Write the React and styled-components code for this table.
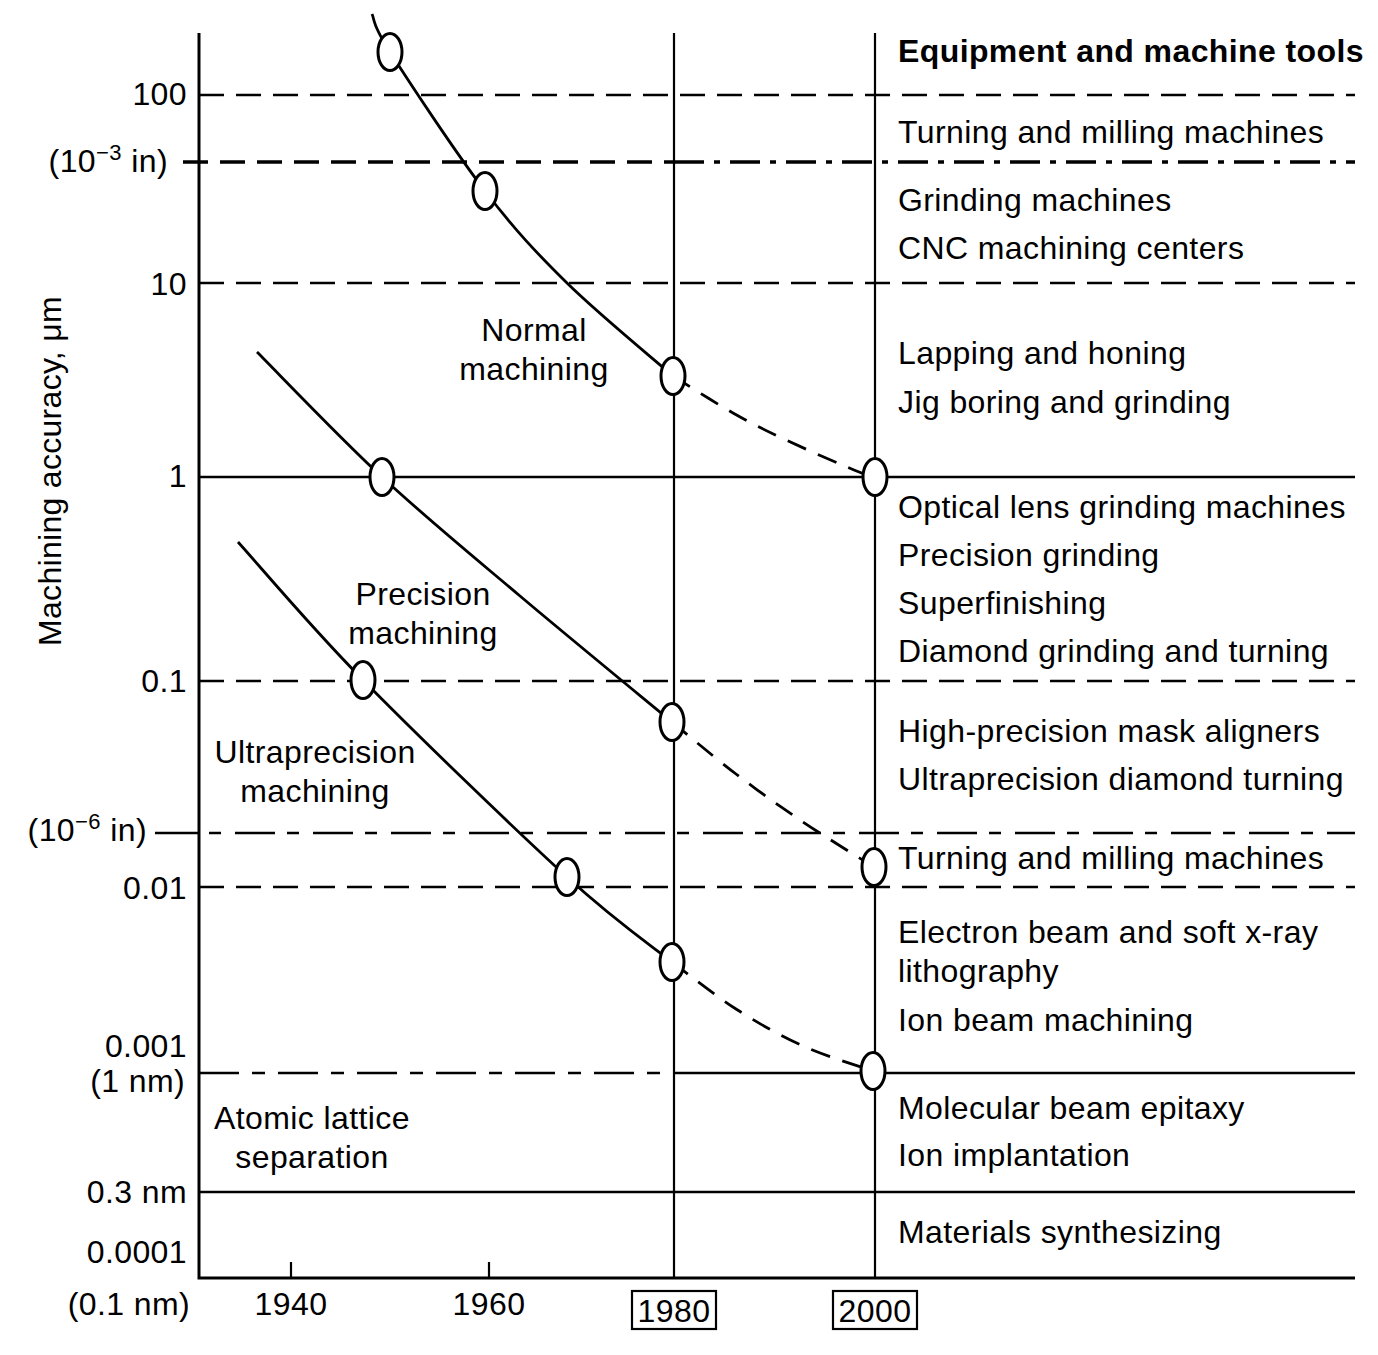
import styled, { createGlobalStyle } from "styled-components";

const GlobalStyle = createGlobalStyle`
  html, body {
    margin: 0;
    padding: 0;
    background: #fff;
  }
  body {
    font-family: "Liberation Sans", Arial, Helvetica, sans-serif;
  }
`;

// chart geometry (px)
const AXIS_X = 199;
const AXIS_BOTTOM = 1278;
const TOP = 33;
const RIGHT = 1355;
const X1980 = 674;
const X2000 = 875;

const DASHES = {
  solid: "none",
  dash: "25 12",
  dashDot: "30 10 6 10",
  longShort: "40 13 13 13",
  shortLong: "12 14 40 12",
};

// catmull-rom through the points, turned into cubic beziers
const smooth = (pts) => {
  let d = `M${pts[0][0]},${pts[0][1]}`;
  for (let i = 0; i < pts.length - 1; i++) {
    const p0 = pts[i - 1] || pts[i];
    const p1 = pts[i];
    const p2 = pts[i + 1];
    const p3 = pts[i + 2] || p2;
    const c1x = p1[0] + (p2[0] - p0[0]) / 6;
    const c1y = p1[1] + (p2[1] - p0[1]) / 6;
    const c2x = p2[0] - (p3[0] - p1[0]) / 6;
    const c2y = p2[1] - (p3[1] - p1[1]) / 6;
    d += ` C${c1x},${c1y} ${c2x},${c2y} ${p2[0]},${p2[1]}`;
  }
  return d;
};

const gridLines = [
  { x1: AXIS_X, x2: RIGHT, y: 95, kind: "dash" },
  { x1: 183, x2: X1980, y: 162, kind: "dash", weight: 3.4 },
  { x1: X1980, x2: RIGHT, y: 162, kind: "dashDot", weight: 3.4 },
  { x1: AXIS_X, x2: RIGHT, y: 283, kind: "dash" },
  { x1: AXIS_X, x2: RIGHT, y: 477, kind: "solid" },
  { x1: AXIS_X, x2: RIGHT, y: 681, kind: "dash" },
  { x1: 155, x2: AXIS_X, y: 833, kind: "solid" },
  { x1: 209, x2: RIGHT, y: 833, kind: "shortLong" },
  { x1: AXIS_X, x2: RIGHT, y: 887, kind: "dash" },
  { x1: AXIS_X, x2: X1980 - 10, y: 1073, kind: "longShort" },
  { x1: X1980, x2: RIGHT, y: 1073, kind: "solid" },
  { x1: AXIS_X, x2: RIGHT, y: 1192, kind: "solid" },
];

const yLabels = [
  { text: "100", x: 187, y: 105 },
  { text: "(10", sup: "−3", rest: " in)", x: 168, y: 172 },
  { text: "10", x: 187, y: 295 },
  { text: "1", x: 187, y: 487 },
  { text: "0.1", x: 187, y: 692 },
  { text: "(10", sup: "−6", rest: " in)", x: 147, y: 841 },
  { text: "0.01", x: 187, y: 899 },
  { text: "0.001", x: 187, y: 1057 },
  { text: "(1 nm)", x: 185, y: 1092 },
  { text: "0.3 nm", x: 187, y: 1203 },
  { text: "0.0001", x: 187, y: 1263 },
  { text: "(0.1 nm)", x: 190, y: 1315 },
];

const years = [
  { label: "1940", x: 291 },
  { label: "1960", x: 489 },
  { label: "1980", x: X1980, boxed: true },
  { label: "2000", x: X2000, boxed: true },
];

const regionLabels = [
  { lines: ["Normal", "machining"], x: 534, y: 341 },
  { lines: ["Precision", "machining"], x: 423, y: 605 },
  { lines: ["Ultraprecision", "machining"], x: 315, y: 763 },
  { lines: ["Atomic lattice", "separation"], x: 312, y: 1129 },
];

const equipment = [
  { text: "Turning and milling machines", y: 143 },
  { text: "Grinding machines", y: 211 },
  { text: "CNC machining centers", y: 259 },
  { text: "Lapping and honing", y: 364 },
  { text: "Jig boring and grinding", y: 413 },
  { text: "Optical lens grinding machines", y: 518 },
  { text: "Precision grinding", y: 566 },
  { text: "Superfinishing", y: 614 },
  { text: "Diamond grinding and turning", y: 662 },
  { text: "High-precision mask aligners", y: 742 },
  { text: "Ultraprecision diamond turning", y: 790 },
  { text: "Turning and milling machines", y: 869 },
  { text: "Electron beam and soft x-ray", y: 943 },
  { text: "lithography", y: 982 },
  { text: "Ion beam machining", y: 1031 },
  { text: "Molecular beam epitaxy", y: 1119 },
  { text: "Ion implantation", y: 1166 },
  { text: "Materials synthesizing", y: 1243 },
];

const trends = [
  {
    solid: [[372, 14], [390, 52], [485, 191], [567, 283], [673, 376]],
    dashed: [[673, 376], [733, 413], [786, 440], [854, 470], [875, 477]],
    points: [[390, 52], [485, 191], [673, 376], [875, 477]],
  },
  {
    solid: [[257, 352], [382, 477], [520, 596], [672, 722]],
    dashed: [[672, 722], [736, 774], [803, 822], [874, 867]],
    points: [[382, 477], [672, 722], [874, 867]],
  },
  {
    solid: [[238, 542], [363, 680], [567, 877], [672, 962]],
    dashed: [[672, 962], [736, 1009], [803, 1046], [873, 1071]],
    points: [[363, 680], [567, 877], [672, 962], [873, 1071]],
  },
];

function App() {
  return (
    <>
      <GlobalStyle />
      <Figure>
        <Chart width="1378" height="1355" viewBox="0 0 1378 1355">
          {gridLines.map((l, i) => (
            <GridLine
              key={i}
              x1={l.x1}
              x2={l.x2}
              y1={l.y}
              y2={l.y}
              $kind={l.kind}
              $weight={l.weight}
            />
          ))}

          <RuleLine x1={X1980} x2={X1980} y1={TOP} y2={AXIS_BOTTOM} />
          <RuleLine x1={X2000} x2={X2000} y1={TOP} y2={AXIS_BOTTOM} />

          <AxisLine
            points={`${AXIS_X},${TOP} ${AXIS_X},${AXIS_BOTTOM} ${RIGHT},${AXIS_BOTTOM}`}
          />
          <RuleLine x1={291} x2={291} y1={1262} y2={AXIS_BOTTOM} />
          <RuleLine x1={489} x2={489} y1={1262} y2={AXIS_BOTTOM} />

          {trends.map((t, i) => (
            <g key={i}>
              <Curve d={smooth(t.solid)} />
              <Curve d={smooth(t.dashed)} $dashed />
              {t.points.map(([cx, cy], j) => (
                <Marker key={j} cx={cx} cy={cy} />
              ))}
            </g>
          ))}

          <AxisTitle transform="translate(61 471) rotate(-90)">
            Machining accuracy, μm
          </AxisTitle>

          {yLabels.map((l, i) => (
            <Label key={i} x={l.x} y={l.y} $anchor="end">
              {l.text}
              {l.sup && (
                <>
                  <Sup dy="-12">{l.sup}</Sup>
                  <tspan dy="12">{l.rest}</tspan>
                </>
              )}
            </Label>
          ))}

          {years.map((yr) => (
            <g key={yr.label}>
              {yr.boxed && <YearBox x={yr.x - 42} y={1291} width="84" height="38" />}
              <Label x={yr.x} y={yr.boxed ? 1322 : 1315} $anchor="middle">
                {yr.label}
              </Label>
            </g>
          ))}

          {regionLabels.map((r) =>
            r.lines.map((line, j) => (
              <Label key={r.lines[0] + j} x={r.x} y={r.y + j * 39} $anchor="middle">
                {line}
              </Label>
            ))
          )}

          <Label x={898} y={62} $bold>
            Equipment and machine tools
          </Label>
          {equipment.map((e, i) => (
            <Label key={i} x={898} y={e.y}>
              {e.text}
            </Label>
          ))}
        </Chart>
      </Figure>
    </>
  );
}

const Figure = styled.figure`
  margin: 0;
  width: 1378px;
  height: 1355px;
  background: #fff;
`;

const Chart = styled.svg`
  display: block;
`;

const GridLine = styled.line`
  stroke: #000;
  stroke-width: ${(p) => p.$weight || 2.4};
  stroke-dasharray: ${(p) => DASHES[p.$kind]};
`;

const RuleLine = styled.line`
  stroke: #000;
  stroke-width: 2.2;
`;

const AxisLine = styled.polyline`
  fill: none;
  stroke: #000;
  stroke-width: 3;
`;

const Curve = styled.path`
  fill: none;
  stroke: #000;
  stroke-width: 2.8;
  stroke-dasharray: ${(p) => (p.$dashed ? "20 13" : "none")};
`;

const Marker = styled.ellipse.attrs({ rx: 12, ry: 18.5 })`
  fill: #fff;
  stroke: #000;
  stroke-width: 3;
`;

const YearBox = styled.rect`
  fill: none;
  stroke: #000;
  stroke-width: 2.2;
`;

const Label = styled.text`
  font-family: "Liberation Sans", Arial, Helvetica, sans-serif;
  font-size: 32px;
  letter-spacing: 0.4px;
  font-weight: ${(p) => (p.$bold ? 700 : 400)};
  text-anchor: ${(p) => p.$anchor || "start"};
  fill: #000;
`;

const Sup = styled.tspan`
  font-size: 22px;
`;

const AxisTitle = styled.text`
  font-family: "Liberation Sans", Arial, Helvetica, sans-serif;
  font-size: 32px;
  letter-spacing: 0.3px;
  text-anchor: middle;
  fill: #000;
`;

export default App;
